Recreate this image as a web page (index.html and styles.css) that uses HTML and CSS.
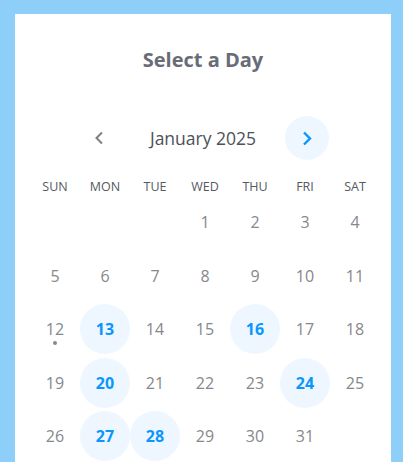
FILE: index.html
```html
<!DOCTYPE html>
<html lang="en">
<head>
  <meta charset="UTF-8">
  <title>Select a Day</title>
  <link rel="stylesheet" href="styles.css">
</head>
<body>
  <div class="card">
    <h2>Select a Day</h2>

    <div class="month-nav">
      <button class="nav-btn prev" aria-label="Previous month">
        <svg width="10" height="14" viewBox="0 0 10 14"><path d="M8 1.5L2.5 7L8 12.5" fill="none" stroke="currentColor" stroke-width="2"/></svg>
      </button>
      <div class="month-label">January 2025</div>
      <button class="nav-btn next" aria-label="Next month">
        <svg width="11" height="15" viewBox="0 0 11 15"><path d="M2 1.5L8 7.5L2 13.5" fill="none" stroke="currentColor" stroke-width="2.4"/></svg>
      </button>
    </div>

    <div class="weekdays">
      <span>SUN</span><span>MON</span><span>TUE</span><span>WED</span><span>THU</span><span>FRI</span><span>SAT</span>
    </div>

    <div class="days">
      <span></span><span></span><span></span>
      <span class="day">1</span><span class="day">2</span><span class="day">3</span><span class="day">4</span>
      <span class="day">5</span><span class="day">6</span><span class="day">7</span><span class="day">8</span><span class="day">9</span><span class="day">10</span><span class="day">11</span>
      <span class="day today">12</span><span class="day open">13</span><span class="day">14</span><span class="day">15</span><span class="day open">16</span><span class="day">17</span><span class="day">18</span>
      <span class="day">19</span><span class="day open">20</span><span class="day">21</span><span class="day">22</span><span class="day">23</span><span class="day open">24</span><span class="day">25</span>
      <span class="day">26</span><span class="day open">27</span><span class="day open">28</span><span class="day">29</span><span class="day">30</span><span class="day">31</span>
    </div>
  </div>
</body>
</html>
```

FILE: styles.css
```css
body {
  margin: 0;
  background: #8ecffa;
  font-family: 'Open Sans', sans-serif;
  height: 100vh;
  overflow: hidden;
}

.card {
  background: #fff;
  width: 376px;
  margin: 14px 0 0 15px;
  padding: 34px 0 40px;
  box-sizing: border-box;
}

h2 {
  margin: 0;
  text-align: center;
  font-size: 20px;
  line-height: 24px;
  font-weight: 700;
  color: #686c76;
}

.month-nav {
  display: grid;
  grid-template-columns: 44px 1fr 44px;
  align-items: center;
  width: 251px;
  margin: 44px auto 0;
}

.nav-btn {
  width: 44px;
  height: 44px;
  border: none;
  border-radius: 50%;
  background: none;
  padding: 0;
  display: flex;
  align-items: center;
  justify-content: center;
  cursor: pointer;
}

.nav-btn.prev {
  color: #7d7f84;
  padding-right: 1px;
}

.nav-btn.next {
  background: #eef7ff;
  color: #0a96ff;
  padding-left: 2px;
}

.month-label {
  text-align: center;
  font-size: 17.5px;
  color: #4d5158;
}

.weekdays {
  display: grid;
  grid-template-columns: repeat(7, 50px);
  margin: 19px 0 0 15px;
  font-size: 12.5px;
  line-height: 16px;
  color: #55595f;
  text-align: center;
}

.days {
  display: grid;
  grid-template-columns: repeat(7, 50px);
  grid-auto-rows: 50px;
  row-gap: 3.6px;
  margin: 2px 0 0 15px;
}

.day {
  position: relative;
  display: flex;
  align-items: center;
  justify-content: center;
  border-radius: 50%;
  font-size: 16px;
  color: #86888c;
}

.day.open {
  background: #eef7ff;
  color: #0a96ff;
  font-weight: 700;
}

.day.today::after {
  content: "";
  position: absolute;
  left: 23px;
  top: 37px;
  width: 4px;
  height: 4px;
  border-radius: 50%;
  background: #86888c;
}
```
